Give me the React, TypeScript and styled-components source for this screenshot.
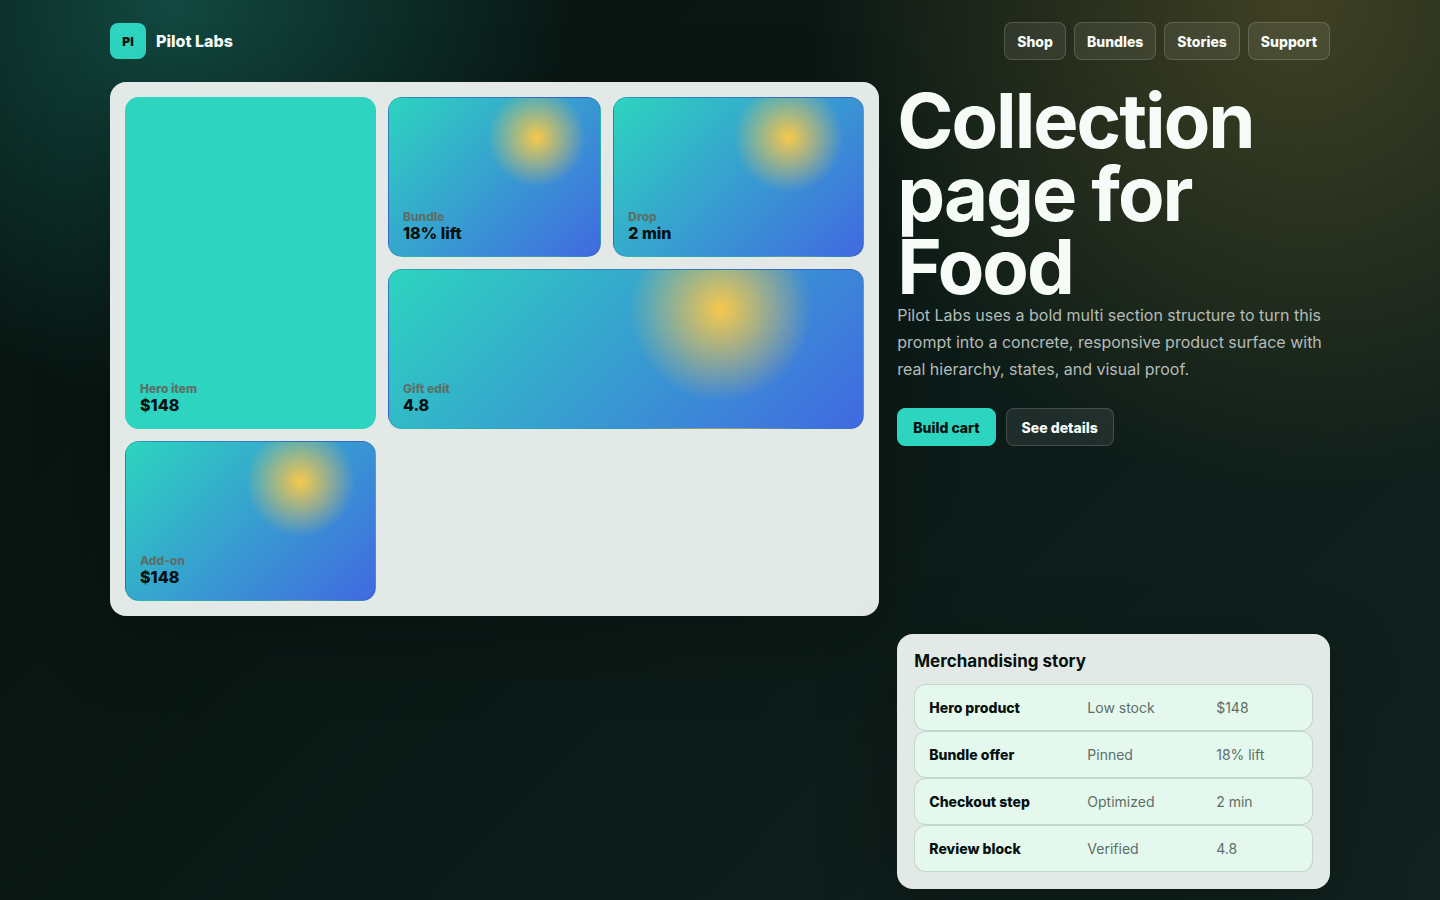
import React from "react";
import styled, { createGlobalStyle } from "styled-components";

const GlobalStyle = createGlobalStyle`
  *, *::before, *::after { box-sizing: border-box; }
  body {
    margin: 0;
    font-family: Inter, "Liberation Sans", sans-serif;
    color: #f6fbf8;
    background: #07110f;
  }
  h1, h2, p { margin: 0; }
`;

const Page = styled.div`
  min-height: 100vh;
  padding: 22px 24px 7px;
  background:
    radial-gradient(circle at 12% 0%, rgba(45, 212, 191, 0.28), transparent 26%),
    radial-gradient(circle at 90% 0%, rgba(246, 200, 76, 0.22), transparent 31%),
    linear-gradient(135deg, #06120f, #11221e);
`;

const Shell = styled.div`
  width: 100%;
  max-width: 1220px;
  margin: 0 auto;
`;

const Header = styled.header`
  display: flex;
  align-items: center;
  justify-content: space-between;
  margin-bottom: 22px;
`;

const Brand = styled.a`
  display: flex;
  align-items: center;
  gap: 10px;
  color: inherit;
  font-size: 16px;
  font-weight: 800;
  text-decoration: none;
`;

const Mark = styled.span`
  display: grid;
  place-items: center;
  width: 36px;
  height: 36px;
  border-radius: 8px;
  background: #2dd4bf;
  color: #07110f;
  font-size: 12px;
  font-weight: 900;
`;

const Nav = styled.nav`
  display: flex;
  gap: 8px;
`;

const NavLink = styled.a`
  display: flex;
  align-items: center;
  height: 38px;
  padding: 0 12px;
  border: 1px solid rgba(255, 255, 255, 0.16);
  border-radius: 8px;
  background: rgba(255, 255, 255, 0.08);
  color: inherit;
  font-size: 14px;
  font-weight: 800;
  text-decoration: none;
`;

const Layout = styled.main`
  display: grid;
  grid-template-columns: 16fr 9fr;
  gap: 18px;
`;

const Panel = styled.section`
  border-radius: 16px;
  background: #e3e9e6;
  color: #07110f;
  box-shadow: 0 24px 80px rgba(0, 0, 0, 0.24);
`;

const Board = styled(Panel)`
  display: grid;
  grid-template-columns: 20fr 17fr 20fr;
  grid-auto-rows: 160px;
  gap: 12px;
  padding: 15px;
`;

const Tile = styled.article<{ $kind?: "tall" | "wide" }>`
  display: flex;
  flex-direction: column;
  justify-content: flex-end;
  padding: 14px;
  border: 1px solid ${(p) => (p.$kind === "tall" ? "transparent" : "rgba(7, 17, 15, 0.12)")};
  border-radius: 14px;
  grid-row: ${(p) => (p.$kind === "tall" ? "span 2" : "auto")};
  grid-column: ${(p) => (p.$kind === "wide" ? "span 2" : "auto")};
  background: ${(p) =>
    p.$kind === "tall"
      ? "#2dd4bf"
      : "radial-gradient(circle at 70% 25%, #f6c84c, transparent 26%), linear-gradient(135deg, #2dd4bf, #4169e1)"};
`;

const TileLabel = styled.span`
  color: #5c6f69;
  font-size: 12px;
  font-weight: 800;
  line-height: 14px;
`;

const TileValue = styled.strong`
  font-size: 16px;
  font-weight: 800;
  line-height: 18px;
`;

const Intro = styled.section`
  display: flex;
  flex-direction: column;
  align-items: flex-start;
`;

const Title = styled.h1`
  padding-top: 2px;
  font-size: 76px;
  font-weight: 700;
  line-height: 73px;
  letter-spacing: -2px;
`;

const Lead = styled.p`
  margin-top: -1px;
  color: #b3bcb8;
  font-size: 16px;
  line-height: 27px;
`;

const Actions = styled.div`
  display: flex;
  gap: 10px;
  margin-top: 25px;
`;

const Button = styled.button<{ $primary?: boolean }>`
  height: 38px;
  padding: 0 15px;
  border: 1px solid ${(p) => (p.$primary ? "#2dd4bf" : "rgba(255, 255, 255, 0.16)")};
  border-radius: 8px;
  background: ${(p) => (p.$primary ? "#2dd4bf" : "rgba(255, 255, 255, 0.08)")};
  color: ${(p) => (p.$primary ? "#07110f" : "#f6fbf8")};
  font: inherit;
  font-size: 14px;
  font-weight: 800;
`;

const Story = styled(Panel)`
  grid-column: 2;
  padding: 17px;
`;

const StoryTitle = styled.h2`
  margin-bottom: 12px;
  font-size: 17px;
  font-weight: 700;
  line-height: 21px;
`;

const Table = styled.table`
  display: block;
`;

const TableBody = styled.tbody`
  display: block;
`;

const Row = styled.tr`
  display: grid;
  grid-template-columns: 25fr 20fr 14fr;
  gap: 12px;
  padding: 14px;
  border: 1px solid rgba(7, 17, 15, 0.14);
  border-radius: 12px;
  background: #e4f8ed;
  font-size: 14px;
  line-height: 17px;
`;

const RowName = styled.th`
  padding: 0;
  font-weight: 800;
  text-align: left;
`;

const Cell = styled.td`
  padding: 0;
  color: #5c6f69;
`;

const links = ["Shop", "Bundles", "Stories", "Support"];

const tiles: { label: string; value: string; kind?: "tall" | "wide" }[] = [
  { label: "Hero item", value: "$148", kind: "tall" },
  { label: "Bundle", value: "18% lift" },
  { label: "Drop", value: "2 min" },
  { label: "Gift edit", value: "4.8", kind: "wide" },
  { label: "Add-on", value: "$148" },
];

const rows = [
  ["Hero product", "Low stock", "$148"],
  ["Bundle offer", "Pinned", "18% lift"],
  ["Checkout step", "Optimized", "2 min"],
  ["Review block", "Verified", "4.8"],
];

export default function App() {
  return (
    <>
      <GlobalStyle />
      <Page>
        <Shell>
          <Header>
            <Brand href="#">
              <Mark>PI</Mark>
              Pilot Labs
            </Brand>
            <Nav aria-label="Main">
              {links.map((link) => (
                <NavLink href={`#${link.toLowerCase()}`} key={link}>
                  {link}
                </NavLink>
              ))}
            </Nav>
          </Header>
          <Layout>
            <Board aria-label="Collection">
              {tiles.map((tile) => (
                <Tile $kind={tile.kind} key={tile.label}>
                  <TileLabel>{tile.label}</TileLabel>
                  <TileValue>{tile.value}</TileValue>
                </Tile>
              ))}
            </Board>
            <Intro>
              <Title>Collection page for Food</Title>
              <Lead>
                Pilot Labs uses a bold multi section structure to turn this prompt into a
                concrete, responsive product surface with real hierarchy, states, and
                visual proof.
              </Lead>
              <Actions>
                <Button type="button" $primary>
                  Build cart
                </Button>
                <Button type="button">See details</Button>
              </Actions>
            </Intro>
            <Story aria-labelledby="story-title">
              <StoryTitle id="story-title">Merchandising story</StoryTitle>
              <Table aria-labelledby="story-title">
                <TableBody>
                  {rows.map(([name, state, value]) => (
                    <Row key={name}>
                      <RowName scope="row">{name}</RowName>
                      <Cell>{state}</Cell>
                      <Cell>{value}</Cell>
                    </Row>
                  ))}
                </TableBody>
              </Table>
            </Story>
          </Layout>
        </Shell>
      </Page>
    </>
  );
}
